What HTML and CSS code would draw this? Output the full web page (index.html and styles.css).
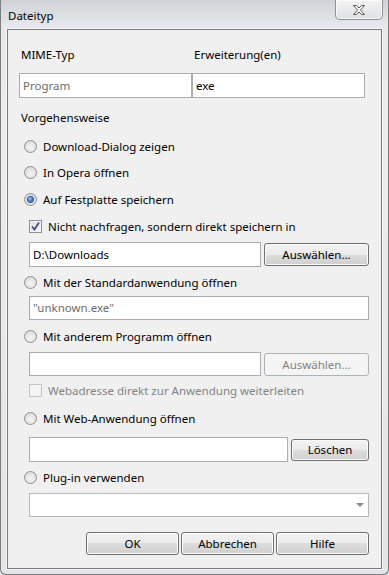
FILE: index.html
```html
<!DOCTYPE html>
<html lang="de">

<head>
    <meta charset="UTF-8">
    <meta name="viewport" content="width=device-width, initial-scale=1.0">
    <title>Dateityp</title>
    <link rel="stylesheet" href="styles.css">
</head>

<body>
    <div class="window">
        <div class="titlebar">
            <span class="title">Dateityp</span>
            <span class="close-btn">
                <svg width="12" height="10" viewBox="0 0 12 10">
                    <path d="M0.5 0.5h3l2.5 2.5 2.5-2.5h3l-4 4.5 4 4.5h-3l-2.5-2.5-2.5 2.5h-3l4-4.5z"
                        fill="#fff" stroke="#5a5a5a" stroke-width="1" stroke-linejoin="round"></path>
                </svg>
            </span>
        </div>

        <div class="client">
            <div class="type-grid">
                <span class="col-label">MIME-Typ</span>
                <span class="col-label">Erweiterung(en)</span>
                <div class="field muted">Program</div>
                <div class="field">exe</div>
            </div>

            <div class="section-label">Vorgehensweise</div>

            <div class="option mt-10"><span class="radio"></span>Download-Dialog zeigen</div>
            <div class="option mt-8"><span class="radio"></span>In Opera öffnen</div>
            <div class="option mt-9"><span class="radio checked"></span>Auf Festplatte speichern</div>
            <div class="check-option mt-9">
                <span class="checkbox">
                    <svg width="11" height="11" viewBox="0 0 11 11">
                        <path d="M2 5.5l2.5 3 4.5-7" fill="none" stroke="#3b4f8f" stroke-width="1.8"></path>
                    </svg>
                </span>
                Nicht nachfragen, sondern direkt speichern in
            </div>
            <div class="field-row mt-7">
                <div class="field">D:\Downloads</div>
                <button class="btn wide">Auswählen...</button>
            </div>

            <div class="option mt-6"><span class="radio"></span>Mit der Standardanwendung öffnen</div>
            <div class="field-row mt-5">
                <div class="field muted short">"unknown.exe"</div>
            </div>

            <div class="option mt-7"><span class="radio"></span>Mit anderem Programm öffnen</div>
            <div class="field-row mt-7">
                <div class="field short"></div>
                <button class="btn wide" disabled>Auswählen...</button>
            </div>
            <div class="check-option disabled mt-5">
                <span class="checkbox"></span>
                Webadresse direkt zur Anwendung weiterleiten
            </div>

            <div class="option mt-10"><span class="radio"></span>Mit Web-Anwendung öffnen</div>
            <div class="field-row mt-10">
                <div class="field"></div>
                <button class="btn clear">Löschen</button>
            </div>

            <div class="option mt-6"><span class="radio"></span>Plug-in verwenden</div>
            <div class="field-row mt-7">
                <div class="select short"><span class="arrow"></span></div>
            </div>

            <div class="dialog-buttons">
                <button class="btn">OK</button>
                <button class="btn">Abbrechen</button>
                <button class="btn">Hilfe</button>
            </div>
        </div>
    </div>
</body>

</html>
```

FILE: styles.css
```css
* {
    margin: 0;
    padding: 0;
    box-sizing: border-box;
    font-family: "Noto Sans", "Open Sans", sans-serif;
    font-size: 11.5px;
}

body {
    width: 389px;
    height: 575px;
    overflow: hidden;
    background-color: #dcdfe3;
}

.window {
    width: 389px;
    height: 575px;
    display: flex;
    flex-direction: column;
    border: 1px solid #7d7d7d;
    border-top: none;
    border-radius: 0 0 6px 6px;
    background: linear-gradient(to bottom, #cfd2d6 0, #e6e8eb 26px, #eaecee 120px, #e3e5e8 100%);
}

.titlebar {
    height: 29px;
    display: flex;
    justify-content: space-between;
    align-items: flex-start;
    padding-left: 7px;
}

.title {
    line-height: 18px;
    margin-top: 7px;
    color: #000;
}

.close-btn {
    width: 48px;
    height: 20px;
    margin-right: 5px;
    display: flex;
    align-items: center;
    justify-content: center;
    border: 1px solid #8e9094;
    border-top: none;
    border-radius: 0 0 5px 5px;
    background: linear-gradient(to bottom, #f3f3f3, #dfe1e3);
    box-shadow: inset 0 0 0 1px rgba(255, 255, 255, 0.7);
}

.client {
    flex: 1;
    margin: 0 6px 5px 6px;
    border: 1px solid #7b7b7b;
    background-color: #f0f0f0;
    box-shadow: 0 0 0 1px rgba(255, 255, 255, 0.6);
    padding-right: 12px;
    display: flex;
    flex-direction: column;
    color: #000;
}

.type-grid {
    margin: 16px 0 0 11px;
    display: grid;
    grid-template-columns: 173px 173px;
    grid-template-rows: 18px 25px;
    row-gap: 9px;
}

.col-label {
    line-height: 18px;
    padding-left: 2px;
}

.field {
    height: 25px;
    flex: 1;
    border: 1px solid #abadb3;
    background-color: #fff;
    padding-left: 3px;
    line-height: 23px;
    color: #000;
}

.field.short {
    height: 24px;
    line-height: 22px;
}

.field.muted {
    color: #6d6d6d;
}

.section-label {
    margin: 11px 0 0 13px;
    line-height: 18px;
}

.option,
.check-option {
    height: 18px;
    display: flex;
    align-items: center;
    gap: 6px;
    margin-left: 16px;
}

.check-option {
    margin-left: 21px;
}

.check-option.disabled {
    color: #838383;
}

.radio {
    width: 13px;
    height: 13px;
    border-radius: 50%;
    border: 1px solid #8e8f8f;
    background: radial-gradient(circle at 50% 60%, #f6f6f6 0, #e3e3e3 55%, #cfcfcf 100%);
    display: flex;
    align-items: center;
    justify-content: center;
}

.radio.checked::after {
    content: "";
    width: 5px;
    height: 5px;
    border-radius: 50%;
    background: radial-gradient(circle at 40% 35%, #9fd0f5 0, #2a6fc0 60%, #1b4f95 100%);
    box-shadow: 0 0 0 1px #1f5690;
}

.checkbox {
    width: 13px;
    height: 13px;
    border: 1px solid #8e8f8f;
    background: linear-gradient(135deg, #dcdcdc, #fafafa);
    box-shadow: inset 0 0 0 1px #f4f4f4;
    display: flex;
    align-items: center;
    justify-content: center;
}

.check-option.disabled .checkbox {
    border-color: #c4c4c4;
    background: #f4f4f4;
    box-shadow: none;
}

.field-row {
    display: flex;
    align-items: center;
    gap: 3px;
    margin-left: 21px;
}

.btn {
    height: 23px;
    width: 93px;
    border: 1px solid #707070;
    border-radius: 3px;
    background: linear-gradient(to bottom, #f2f2f2 0%, #ebebeb 50%, #dddddd 50%, #cfcfcf 100%);
    box-shadow: inset 0 0 0 1px #fcfcfc;
    color: #000;
    font-size: 11.5px;
}

.btn.wide {
    width: 105px;
}

.btn.clear {
    width: 78px;
    height: 22px;
}

.btn:disabled {
    border-color: #adb2b5;
    background: #f4f4f4;
    box-shadow: none;
    color: #838383;
}

.select {
    flex: 1;
    height: 24px;
    border: 1px solid #b9b9b9;
    background-color: #fff;
    display: flex;
    align-items: center;
    justify-content: flex-end;
    padding-right: 4px;
}

.arrow {
    width: 0;
    height: 0;
    border-left: 4px solid transparent;
    border-right: 4px solid transparent;
    border-top: 4px solid #8a8a8a;
}

.dialog-buttons {
    display: flex;
    justify-content: flex-end;
    gap: 2px;
    margin-top: 15px;
}

.mt-5 { margin-top: 5px; }
.mt-6 { margin-top: 6px; }
.mt-7 { margin-top: 7px; }
.mt-8 { margin-top: 8px; }
.mt-9 { margin-top: 9px; }
.mt-10 { margin-top: 10px; }
```
